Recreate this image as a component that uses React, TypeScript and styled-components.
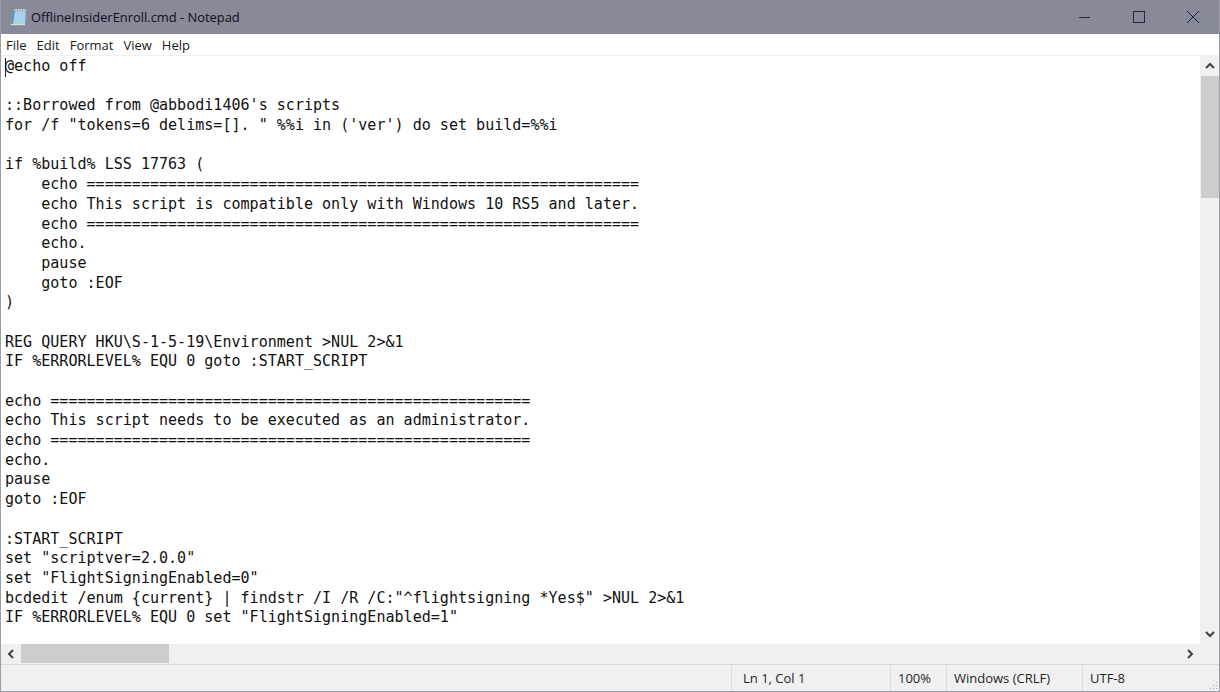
import React from "react";
import styled, { createGlobalStyle } from "styled-components";

const Global = createGlobalStyle`
  html, body { margin: 0; padding: 0; background: #fff; overflow: hidden; }
  #root { width: 1220px; height: 692px; }
`;

const Win = styled.div`
  box-sizing: border-box;
  width: 1220px;
  height: 692px;
  display: flex;
  flex-direction: column;
  border-left: 1px solid #9a9ca8;
  border-right: 1px solid #9a9ca8;
  border-bottom: 1px solid #9a9ca8;
  background: #fff;
  font-family: "Open Sans", "Noto Sans", sans-serif;
  overflow: hidden;
`;

const TitleBar = styled.div`
  flex: 0 0 34px;
  display: flex;
  align-items: center;
  background: #868a99;
  margin: 0 -1px;
`;

const FileIcon = styled.svg`
  width: 17px;
  height: 18px;
  margin-left: 10px;
  margin-right: 4px;
`;

const TitleText = styled.div`
  flex: 1;
  font-size: 12.9px;
  color: #0e0e22;
  white-space: nowrap;
`;

const WinBtn = styled.div`
  width: 54px;
  height: 34px;
  display: flex;
  align-items: center;
  justify-content: center;
`;

const MenuBar = styled.div`
  flex: 0 0 22px;
  display: flex;
  align-items: center;
  gap: 10px;
  padding: 0 0 0 5px;
  box-sizing: border-box;
  background: #fff;
  border-bottom: 1px solid #f0f0f0;
  font-size: 13px;
  color: #1a1a1a;
`;

const Body = styled.div`
  flex: 1;
  min-height: 0;
  display: flex;
`;

const Editor = styled.div`
  position: relative;
  flex: 1;
  min-width: 0;
  overflow: hidden;
`;

const Code = styled.pre`
  margin: 0;
  padding: 1px 0 0 4px;
  font-family: "DejaVu Sans Mono", monospace;
  font-size: 15.06px;
  line-height: 19.68px;
  color: #111;
`;

const Caret = styled.div`
  position: absolute;
  left: 4px;
  top: 2px;
  width: 1px;
  height: 19px;
  background: #222;
`;

const VScroll = styled.div`
  flex: 0 0 19px;
  display: flex;
  flex-direction: column;
  background: #f0f0f0;
`;

const ArrowBox = styled.div<{ $w?: number; $h?: number }>`
  flex: 0 0 auto;
  width: ${(p) => p.$w ?? 19}px;
  height: ${(p) => p.$h ?? 20}px;
  display: flex;
  align-items: center;
  justify-content: center;
`;

const VThumb = styled.div`
  flex: 0 0 122px;
  margin-left: 1px;
  background: #cdcdcd;
`;

const Spacer = styled.div`
  flex: 1;
`;

const HScroll = styled.div`
  flex: 0 0 20px;
  display: flex;
  align-items: stretch;
  background: #f0f0f0;
`;

const HThumb = styled.div`
  flex: 0 0 148px;
  margin: 0 0 1px;
  background: #cdcdcd;
`;

const Status = styled.div`
  flex: 0 0 26px;
  position: relative;
  display: flex;
  background: #f0f0f0;
  border-top: 1px solid #d9d9d9;
  font-size: 13px;
  color: #1f1f1f;
`;

const Cell = styled.div<{ $w: number; $pad?: number }>`
  flex: 0 0 ${(p) => p.$w}px;
  box-sizing: border-box;
  display: flex;
  align-items: center;
  padding-left: ${(p) => p.$pad ?? 11}px;
  border-left: 1px solid #dcdcdc;
  white-space: nowrap;
`;

const Grip = styled.svg`
  position: absolute;
  right: 1px;
  bottom: 1px;
  width: 10px;
  height: 10px;
`;

const Chevron = ({ d }: { d: string }) => (
  <svg width="10" height="10" viewBox="0 0 10 10">
    <path d={d} fill="none" stroke="#45404a" strokeWidth="2" />
  </svg>
);

const code = `@echo off

::Borrowed from @abbodi1406's scripts
for /f "tokens=6 delims=[]. " %%i in ('ver') do set build=%%i

if %build% LSS 17763 (
    echo =============================================================
    echo This script is compatible only with Windows 10 RS5 and later.
    echo =============================================================
    echo.
    pause
    goto :EOF
)

REG QUERY HKU\\S-1-5-19\\Environment >NUL 2>&1
IF %ERRORLEVEL% EQU 0 goto :START_SCRIPT

echo =====================================================
echo This script needs to be executed as an administrator.
echo =====================================================
echo.
pause
goto :EOF

:START_SCRIPT
set "scriptver=2.0.0"
set "FlightSigningEnabled=0"
bcdedit /enum {current} | findstr /I /R /C:"^flightsigning *Yes$" >NUL 2>&1
IF %ERRORLEVEL% EQU 0 set "FlightSigningEnabled=1"`;

export default function App() {
  return (
    <>
      <Global />
      <Win>
        <TitleBar>
          <FileIcon viewBox="0 0 17 18">
            <path d="M3 1.5h13l-1 14.5H1z" fill="#a6d2ea" />
            <path d="M3 1.5L1 16h2L5 1.5z" fill="#5f8fb5" />
            <path d="M1 16h14v1.2H1z" fill="#e9e0c4" />
            <path d="M4 1h12v2H4z" fill="#cfd3d8" />
            <path d="M5 0.5v3M7.5 0.5v3M10 0.5v3M12.5 0.5v3M15 0.5v3" stroke="#8d9299" strokeWidth="0.8" />
          </FileIcon>
          <TitleText>OfflineInsiderEnroll.cmd - Notepad</TitleText>
          <WinBtn>
            <svg width="12" height="12" viewBox="0 0 12 12">
              <path d="M0 6.5h11" stroke="#2a2a3a" strokeWidth="1" />
            </svg>
          </WinBtn>
          <WinBtn>
            <svg width="12" height="12" viewBox="0 0 12 12">
              <rect x="0.5" y="0.5" width="11" height="11" fill="none" stroke="#22263a" />
            </svg>
          </WinBtn>
          <WinBtn>
            <svg width="12" height="12" viewBox="0 0 12 12">
              <path d="M0 0l12 12M12 0L0 12" stroke="#16243a" strokeWidth="1" />
            </svg>
          </WinBtn>
        </TitleBar>
        <MenuBar>
          <span>File</span>
          <span>Edit</span>
          <span>Format</span>
          <span>View</span>
          <span>Help</span>
        </MenuBar>
        <Body>
          <Editor>
            <Code>{code}</Code>
            <Caret />
          </Editor>
          <VScroll>
            <ArrowBox>
              <Chevron d="M1 7l4-4 4 4" />
            </ArrowBox>
            <VThumb />
            <Spacer />
            <ArrowBox>
              <Chevron d="M1 3l4 4 4-4" />
            </ArrowBox>
          </VScroll>
        </Body>
        <HScroll>
          <ArrowBox $w={20}>
            <Chevron d="M7 1L3 5l4 4" />
          </ArrowBox>
          <HThumb />
          <Spacer />
          <ArrowBox $w={20}>
            <Chevron d="M3 1l4 4-4 4" />
          </ArrowBox>
          <ArrowBox $w={19} />
        </HScroll>
        <Status>
          <Spacer />
          <Cell $w={159}>Ln 1, Col 1</Cell>
          <Cell $w={56} $pad={7}>100%</Cell>
          <Cell $w={136} $pad={7}>Windows (CRLF)</Cell>
          <Cell $w={137} $pad={7}>UTF-8</Cell>
          <Grip viewBox="0 0 10 10">
            <path d="M8 2h1v1H8zM5 5h1v1H5zM8 5h1v1H8zM2 8h1v1H2zM5 8h1v1H5zM8 8h1v1H8z" fill="#a8a8a8" />
          </Grip>
        </Status>
      </Win>
    </>
  );
}
